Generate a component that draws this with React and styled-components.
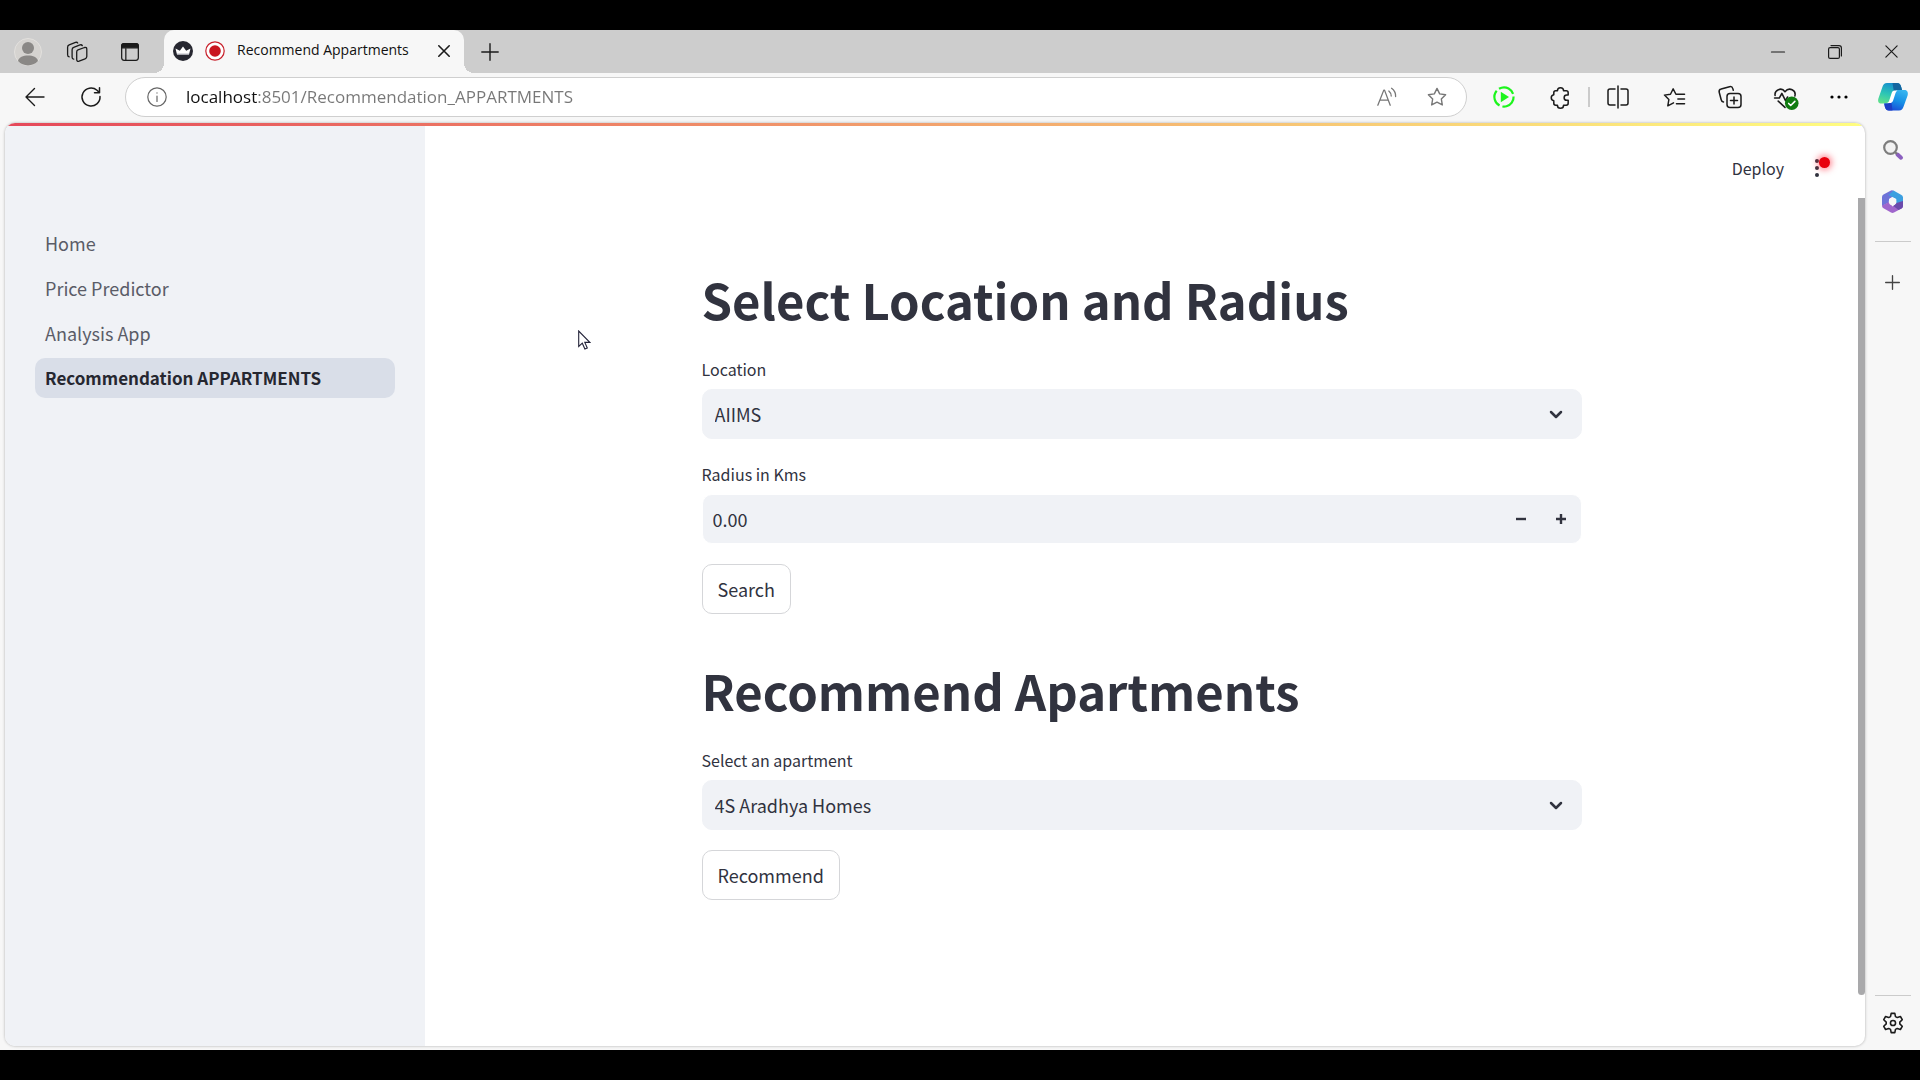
import React, { useState } from "react";
import styled, { createGlobalStyle } from "styled-components";

const GlobalStyle = createGlobalStyle`
  *, *::before, *::after { box-sizing: border-box; }
  body { margin: 0; background: #000; }
  button, input, select { font: inherit; color: inherit; }
`;

const uiFont = `"Open Sans", "Noto Sans", sans-serif`;
const appFont = `"Noto Sans CJK SC", "Noto Sans", sans-serif`;

const Screen = styled.div`
  display: flex;
  flex-direction: column;
  min-height: 100vh;
  padding: 30px 0;
  background: #000;
`;

const Browser = styled.div`
  display: flex;
  flex: 1;
  flex-direction: column;
  background: #f7f7f7;
  font-family: ${uiFont};
`;

const IconButton = styled.button`
  display: flex;
  flex: none;
  align-items: center;
  justify-content: center;
  width: ${(p) => p.$w || 32}px;
  height: 32px;
  padding: 0;
  border: 0;
  background: none;
  color: ${(p) => p.$color || "#1b1b1b"};

  svg { display: block; overflow: visible; }
`;

/* ---- tab strip ---- */

const TabStrip = styled.header`
  display: flex;
  align-items: center;
  height: 43px;
  padding: 0 0 0 2px;
  background: #cdcdcd;
`;

const Tab = styled.div`
  position: relative;
  display: flex;
  align-items: center;
  align-self: stretch;
  width: 300px;
  margin: 0 10px 0 4px;
  padding: 0 4px 2px 9px;
  gap: 12px;
  border-radius: 10px 10px 0 0;
  background: #f7f7f7;
  color: #111;

  svg { flex: none; }

  &::before, &::after {
    content: "";
    position: absolute;
    bottom: 0;
    width: 10px;
    height: 10px;
  }
  &::before {
    right: 100%;
    background: radial-gradient(circle at 0 0, transparent 10px, #f7f7f7 10px);
  }
  &::after {
    left: 100%;
    background: radial-gradient(circle at 100% 0, transparent 10px, #f7f7f7 10px);
  }
`;

const TabTitle = styled.span`
  flex: 1;
  padding-bottom: 2px;
  font-size: 14px;
  line-height: 20px;
  white-space: nowrap;
`;

const WindowButtons = styled.div`
  display: flex;
  margin-left: auto;
`;

/* ---- toolbar ---- */

const Toolbar = styled.div`
  display: flex;
  align-items: center;
  height: 50px;
  padding: 0 0 2px 7px;
`;

const AddressBar = styled.div`
  display: flex;
  flex: 1;
  align-items: center;
  height: 40px;
  margin: 0 9px 0 7px;
  padding: 0 4px 0 15px;
  border: 1px solid #cfcfcf;
  border-radius: 20px;
  background: #fff;
`;

const AddressInput = styled.input`
  flex: 1;
  min-width: 0;
  height: 36px;
  margin-left: 13px;
  padding: 0 0 2px;
  border: 0;
  outline: 0;
  background: linear-gradient(to right, #111 72px, #777 72px);
  background-clip: text;
  -webkit-background-clip: text;
  -webkit-text-fill-color: transparent;
  font-size: 17px;
`;

const Divider = styled.span`
  flex: none;
  width: ${(p) => (p.$across ? "36px" : "2px")};
  height: ${(p) => (p.$across ? "1px" : "20px")};
  margin: ${(p) => (p.$across ? "5px 0" : "0")};
  background: #cbcbcb;
`;

/* ---- page area and rail ---- */

const Body = styled.div`
  display: flex;
  flex: 1;
`;

const Page = styled.div`
  display: flex;
  flex: 1;
  flex-direction: column;
  margin: 0 0 4px 5px;
  overflow: hidden;
  border-radius: 10px;
  background: #fff;
  box-shadow: 0 0 3px rgba(0, 0, 0, 0.3);
  color: #31333f;
  font-family: ${appFont};
`;

const Decoration = styled.div`
  height: 3px;
  background: linear-gradient(90deg, #e5485a, #fffd80);
`;

const PageColumns = styled.div`
  display: flex;
  flex: 1;
`;

const Rail = styled.aside`
  display: flex;
  flex-direction: column;
  align-items: center;
  width: 55px;
  padding: 11px 0;
`;

const RailGroup = styled.div`
  display: flex;
  flex-direction: column;
  align-items: center;
  gap: ${(p) => p.$gap}px;
  margin-top: ${(p) => (p.$bottom ? "auto" : 0)};
`;

const Sidebar = styled.nav`
  display: flex;
  flex: none;
  flex-direction: column;
  gap: 5px;
  width: 420px;
  padding: 97px 30px 20px;
  background: #f0f2f6;
`;

const NavLink = styled.a`
  padding: 0 10px;
  border-radius: 10px;
  background: ${(p) => (p.$active ? "#d9dee8" : "transparent")};
  color: ${(p) => (p.$active ? "#262730" : "#5a5c67")};
  font-size: ${(p) => (p.$active ? 17 : 18)}px;
  font-weight: ${(p) => (p.$active ? 600 : 400)};
  line-height: 40px;
  text-decoration: none;
  white-space: nowrap;
`;

const Main = styled.main`
  display: flex;
  flex: 1;
  flex-direction: column;
`;

const AppHeader = styled.div`
  display: flex;
  align-items: center;
  justify-content: flex-end;
  height: 72px;
  padding: 12px 32px 0 0;
  gap: 17px;
`;

const DeployButton = styled.button`
  padding: 0;
  border: 0;
  background: none;
  font-size: 16px;
  line-height: 24px;
`;

const MenuButton = styled(IconButton)`
  position: relative;
`;

const RecordingDot = styled.span`
  position: absolute;
  top: 5px;
  right: 3px;
  width: 11px;
  height: 11px;
  border-radius: 50%;
  background: #e8000d;
  box-shadow: 0 0 6px 2px rgba(255, 40, 60, 0.55);
`;

const ScrollArea = styled.div`
  display: flex;
  flex: 1;
`;

const ScrollTrack = styled.div`
  width: 7px;
`;

const ScrollThumb = styled.div`
  height: 94%;
  border-radius: 0 0 4px 4px;
  background: #a9a9ab;
`;

const Content = styled.div`
  flex: 1;
  padding: 45px 40px 75px;
`;

const Block = styled.div`
  display: flex;
  flex-direction: column;
  align-items: flex-start;
  gap: 20px;
  max-width: 880px;
  margin: 0 auto;
`;

const Title = styled.h1`
  margin: 0;
  padding: 25px 0 4px;
  font-size: 49px;
  font-weight: 700;
  line-height: 62px;
`;

const Field = styled.div`
  width: 100%;
`;

const Label = styled.label`
  display: block;
  padding-bottom: 5px;
  font-size: 16px;
  line-height: 30px;
`;

const Control = styled.div`
  display: flex;
  align-items: center;
  height: 50px;
  border: 1px solid ${(p) => (p.$inset ? "#fff" : "#f0f2f6")};
  border-radius: 10px;
  background: #f0f2f6;
`;

const SelectBox = styled.select`
  flex: 1;
  align-self: stretch;
  margin-right: -35px;
  padding: 0 40px 0 12px;
  border: 0;
  outline: 0;
  appearance: none;
  background: transparent;
  font-size: 18px;
`;

const Chevron = styled.svg`
  margin-right: 15px;
  pointer-events: none;
`;

const NumberBox = styled.input`
  flex: 1;
  align-self: stretch;
  min-width: 0;
  padding: 0 10px;
  border: 0;
  outline: 0;
  appearance: textfield;
  background: transparent;
  font-size: 18px;

  &::-webkit-inner-spin-button { appearance: none; margin: 0; }
`;

const ActionButton = styled.button`
  height: 50px;
  padding: 0 15px;
  border: 1px solid #d5d6d9;
  border-radius: 10px;
  background: #fff;
  font-size: 18px;
  line-height: 30px;
`;

const Pointer = styled.svg`
  position: absolute;
  top: 330px;
  left: 578px;
`;

const Line = ({ size = 22, w = 1.5, box = 24, children, ...rest }) => (
  <svg width={size} height={size} viewBox={`0 0 ${box} ${box}`} fill="none" stroke="currentColor"
    strokeWidth={w} strokeLinecap="round" strokeLinejoin="round" aria-hidden="true" {...rest}>
    {children}
  </svg>
);

const starPath = "M12 2.6l2.900 6 6.500.9-4.700 4.600 1.100 6.600-5.800-3.100-5.800 3.100 1.100-6.600L2.600 9.500l6.500-.9z";

const Avatar = () => (
  <svg width="28" height="28" viewBox="0 0 28 28">
    <circle cx="14" cy="14" r="13.5" fill="#d5d3d0" stroke="#e3e1de" />
    <circle cx="14" cy="10" r="6" fill="#8a8886" />
    <path d="M4 23c1-4 5-5.500 10-5.500s9 1.500 10 5.500a13.500 13.500 0 0 1-20 0z" fill="#8a8886" />
  </svg>
);

const Workspaces = () => (
  <Line size={22} box={22} w={1.3}>
    <path d="M12 8.800l6.500-2.300c1.500-.4 2.300.2 2.300 1.700v7.300c0 1.200-.6 2-1.700 2.400l-6 2.300c-1.500.5-2.400-.1-2.400-1.600v-7.500c0-1.200.3-1.900 1.300-2.300z" />
    <path d="M7.700 18.200c-1-.1-1.600-.8-1.600-2V8.700c0-1.200.5-2 1.600-2.400l6.300-2.400c1-.3 1.900-.1 2.300.7" />
    <path d="M3.200 15.800c-1-.1-1.600-.8-1.600-2V6.200c0-1.200.5-2 1.600-2.400l6.300-2.400c1-.3 1.800-.1 2.200.6" />
  </Line>
);

const TabActions = () => (
  <Line size={20}>
    <rect x="2" y="2" width="20" height="20" rx="3" />
    <path d="M2 7V5a3 3 0 0 1 3-3h14a3 3 0 0 1 3 3v2z" fill="currentColor" />
    <path d="M7 8v14" />
  </Line>
);

const Crown = () => (
  <svg width="20" height="20" viewBox="0 0 20 20">
    <circle cx="10" cy="10" r="10" fill="#262730" />
    <path d="M2.500 7.500l4.300 2.200L10 5.500l3.200 4.200 4.300-2.200L16 13.500H4z" fill="#fff" />
    <path d="M4 13h12" stroke="#b9b9c2" />
  </svg>
);

const RecordIcon = () => (
  <svg width="20" height="20" viewBox="0 0 20 20">
    <circle cx="10" cy="10" r="9.200" fill="#fff" stroke="#c8202b" strokeWidth="1.200" />
    <circle cx="10" cy="10" r="5.800" fill="#c9151f" />
  </svg>
);

const Close = ({ size = 12, w = 1.4 }) => (
  <Line size={size} box={12} w={w}><path d="M.8.8l10.400 10.400M11.200.8L.8 11.200" /></Line>
);

const Plus = ({ size = 18, w = 1.4 }) => (
  <Line size={size} box={18} w={w}><path d="M9 .8v16.400M.8 9h16.400" /></Line>
);

const Back = () => <Line size={20} box={20} w={1.4}><path d="M19 10H1M9.500 1.500L1 10l8.500 8.500" /></Line>;

const Refresh = () => (
  <Line size={20} box={20}><path d="M19 9.500a9 9 0 1 1-3-6.200L18.300 5.500M18.500.8v5h-5" /></Line>
);

const Info = () => (
  <Line size={20} box={20} w={1.2}><circle cx="10" cy="10" r="9.200" /><path d="M10 9v5.500M10 5.800v.3" /></Line>
);

const ReadAloud = () => (
  <Line size={22} w={1.4}>
    <path d="M2 21L8.500 4.500h.8L15.500 21M4.300 15.500h9" />
    <path d="M14 5.500c1.800 1.500 2.600 3.300 2.600 5.500M17 2.500c3 2.200 4.600 5.200 4.400 9" />
  </Line>
);

const Play = () => (
  <svg width="22" height="24" viewBox="0 0 22 24" fill="none">
    <circle cx="11" cy="12" r="9.600" stroke="#1cf51c" strokeWidth="2.200" strokeDasharray="17.100 3" strokeDashoffset="-2" transform="rotate(-15 11 12)" />
    <path d="M7.800 6.800L16 12l-8.200 5.200z" fill="#1cf51c" />
  </svg>
);

const Puzzle = () => (
  <Line size={23} w={1.6}>
    <path d="M8.800 5a3.200 3.200 0 0 1 6.400 0H18a2 2 0 0 1 2 2v2.500h-1.500a2.700 2.700 0 0 0 0 5.400H20V18a2 2 0 0 1-2 2h-2.800a3.200 3.200 0 0 1-6.400 0H7a2 2 0 0 1-2-2v-2.600a3.200 3.200 0 0 1 0-6.300V7a2 2 0 0 1 2-2z" />
  </Line>
);

const Split = () => (
  <Line size={24}><path d="M9 4H4a2 2 0 0 0-2 2v12a2 2 0 0 0 2 2h5M15 4h5a2 2 0 0 1 2 2v12a2 2 0 0 1-2 2h-5M12 1v22" /></Line>
);

const Favorites = () => (
  <Line size={23}>
    <path d="M11 17.500L5 20.700l1.100-6.600L1.500 9.500l6.300-.9L10.600 3l2.900 5.600M13.500 8.600h9M15.500 13.500h7M14 18.500h8.500" />
  </Line>
);

const Collections = () => (
  <Line size={24}>
    <rect x="9" y="8.500" width="14" height="14" rx="3" />
    <path d="M16 12v7M12.500 15.500h7M5.500 17c-1.300-.2-2-1-2.300-2.200L1.200 7.300C.8 5.600 1.600 4.400 3.200 4l8.300-2.300c1.700-.4 2.900.3 3.300 1.900l.5 1.700" />
  </Line>
);

const Essentials = () => (
  <Line size={25}>
    <path d="M2 10c-.8-5 6-8.500 9.500-3.500 4-5 11-1.500 9.500 4M1.500 12.500H6l2.500-4.500 3.500 7 2-3.500M5 15.500l6.500 6" />
    <circle cx="18" cy="17.500" r="6.500" fill="#107c10" stroke="none" />
    <path d="M15 17.700l2 2 4-4" stroke="#fff" />
  </Line>
);

const Dots = () => (
  <svg width="18" height="4" viewBox="0 0 18 4"><circle cx="2" cy="2" r="1.600" /><circle cx="9" cy="2" r="1.600" /><circle cx="16" cy="2" r="1.600" /></svg>
);

const Copilot = () => (
  <svg width="30" height="28" viewBox="0 0 30 28">
    <defs>
      <linearGradient id="cpA" x1=".6" y1="0" x2=".3" y2="1"><stop stopColor="#168ccf" /><stop offset=".55" stopColor="#2cc5b5" /><stop offset="1" stopColor="#5fe08c" /></linearGradient>
      <linearGradient id="cpB" x1=".3" y1="1" x2=".7" y2="0"><stop stopColor="#1b49d6" /><stop offset=".5" stopColor="#1690e6" /><stop offset="1" stopColor="#35b4ef" /></linearGradient>
    </defs>
    <path d="M9 0h10c2.500 0 3.500 1.500 4.200 4l1 3.500h-4.500c-2.700 0-3.700 1.500-4.400 4l-2 6c-.8 2-2 3-4 3H3.500C.5 20.500-.4 18.500.4 15.500l4-11.500C5.300 1.300 6.500 0 9 0z" fill="url(#cpA)" />
    <path d="M14.500 0H19c2.500 0 3.500 1.500 4.200 4l1 3.500h-4.500c-2 0-3 .8-3.700 2z" fill="#14659f" />
    <path d="M21 27.500H11c-2.500 0-3.500-1.500-4.200-4L6 20.500h3.500c2.700 0 3.800-1.500 4.500-4l2-6c.8-2.200 2-3.500 4-3.500h6.500c3 0 3.900 2.500 3.100 5.500l-4 11c-.9 2.700-2.100 4-4.600 4z" fill="url(#cpB)" />
    <path d="M6.500 20.500h3c2 0 3.200-.8 3.800-2.200l1.200 9.200H11c-2.500 0-3.500-1.500-4.200-4z" fill="#1d3fc4" />
    <path d="M19.500 7.500h-3c-1.500 0-2.300 1-2.900 2.700l-2.300 7c-.6 1.700-1.300 2.600-2.800 2.900h3.200c2 0 2.900-1.100 3.500-2.900l2.200-6.700c.5-1.500 1.100-2.500 2.100-3z" fill="#fff" />
  </svg>
);

const SearchIcon = () => (
  <svg width="20" height="20" viewBox="0 0 20 20" fill="none">
    <path d="M14.500 14.500l3.500 3.200" stroke="#8b5fbf" strokeWidth="4" strokeLinecap="round" />
    <path d="M12 12l2 2" stroke="#777" strokeWidth="2" />
    <circle cx="7.500" cy="7.500" r="6.300" stroke="#7d7d7d" strokeWidth="2.200" fill="#f2f2f2" />
  </svg>
);

const Office = () => (
  <svg width="21" height="23" viewBox="0 0 21 23">
    <path d="M9 .5L1.500 4.500A3 3 0 0 0 0 7v9l7-3.500V9l7-4.500L11.500.7a3 3 0 0 0-2.500-.2z" fill="#6e73d8" />
    <path d="M11.500.6L19 4.700A3 3 0 0 1 21 7.300v9L14.300 13V9L6.500 5z" fill="#3c9fe0" />
    <path d="M21 12v4a3 3 0 0 1-1.500 2.500L12 22.500a3 3 0 0 1-3 0L1.500 18.300A3 3 0 0 1 0 15.500L7 12l3.500 4.500 4-3z" fill="#a066cc" />
    <path d="M21 11v5a3 3 0 0 1-1.500 2.500l-3 1.600-5-4 3-3z" fill="#6b4aab" />
    <circle cx="10.500" cy="11.500" r="3.700" fill="#f7f7f7" />
  </svg>
);

const Gear = () => (
  <Line size={22} w={1.7}>
    <circle cx="12" cy="12" r="2.800" />
    <path d="M10 1.500h4l.7 3.500 2 1.100 3.400-1.200 2 3.500L19.400 11v2l2.700 2.600-2 3.500-3.400-1.200-2 1.100-.7 3.500h-4L9.300 19l-2-1.100-3.400 1.200-2-3.500L4.600 13v-2L1.900 8.400l2-3.500 3.400 1.200 2-1.100z" />
  </Line>
);

const ChevronDown = () => (
  <Chevron width="20" height="20" viewBox="0 0 20 20" fill="none" stroke="#31333f" strokeWidth="2.500" strokeLinecap="round" strokeLinejoin="round" aria-hidden="true">
    <path d="M5 8l5 5 5-5" />
  </Chevron>
);

function SelectField({ id, label, options }) {
  return (
    <Field>
      <Label htmlFor={id}>{label}</Label>
      <Control>
        <SelectBox id={id}>
          {options.map((o) => <option key={o}>{o}</option>)}
        </SelectBox>
        <ChevronDown />
      </Control>
    </Field>
  );
}

function NumberField({ id, label }) {
  const [value, setValue] = useState("0.00");
  const step = (d) => setValue((v) => Math.max(0, Number(v) + d).toFixed(2));
  return (
    <Field>
      <Label htmlFor={id}>{label}</Label>
      <Control $inset>
        <NumberBox id={id} type="number" step="0.01" value={value} onChange={(e) => setValue(e.target.value)} />
        <IconButton $w={40} $color="#31333f" aria-label="Decrease" onClick={() => step(-0.01)}>
          <Line size={10} box={10} w={2.4} strokeLinecap="butt"><path d="M0 5h10" /></Line>
        </IconButton>
        <IconButton $w={40} $color="#31333f" aria-label="Increase" onClick={() => step(0.01)}>
          <Line size={10} box={10} w={2.4} strokeLinecap="butt"><path d="M0 5h10M5 0v10" /></Line>
        </IconButton>
      </Control>
    </Field>
  );
}

const pages = ["Home", "Price Predictor", "Analysis App", "Recommendation APPARTMENTS"];

export default function App() {
  return (
    <Screen>
      <GlobalStyle />
      <Browser>
        <TabStrip>
          <IconButton $w={52} aria-label="Profile"><Avatar /></IconButton>
          <IconButton $w={46} aria-label="Workspaces"><Workspaces /></IconButton>
          <IconButton $w={60} aria-label="Tab actions"><TabActions /></IconButton>
          <Tab>
            <Crown />
            <RecordIcon />
            <TabTitle>Recommend Appartments</TabTitle>
            <IconButton aria-label="Close tab"><Close w={1.6} /></IconButton>
          </Tab>
          <IconButton aria-label="New tab"><Plus /></IconButton>
          <WindowButtons>
            <IconButton $w={57} aria-label="Minimize"><Line size={14} box={14} w={1.2}><path d="M.5 7h13" /></Line></IconButton>
            <IconButton $w={57} aria-label="Restore">
              <Line size={14} box={14} w={1.2}><rect x=".6" y="2.600" width="10.800" height="10.800" rx="1.500" /><path d="M3 .6h8a2.400 2.400 0 0 1 2.400 2.400v8" /></Line>
            </IconButton>
            <IconButton $w={57} aria-label="Close"><Close size={13} w={1.1} /></IconButton>
          </WindowButtons>
        </TabStrip>

        <Toolbar>
          <IconButton $w={56} aria-label="Back"><Back /></IconButton>
          <IconButton $w={55} aria-label="Refresh"><Refresh /></IconButton>
          <AddressBar>
            <IconButton $color="#666" aria-label="Site information"><Info /></IconButton>
            <AddressInput aria-label="Address" defaultValue="localhost:8501/Recommendation_APPARTMENTS" />
            <IconButton $w={50} $color="#767676" aria-label="Read aloud"><ReadAloud /></IconButton>
            <IconButton $w={50} $color="#767676" aria-label="Add to favorites"><Line><path d={starPath} /></Line></IconButton>
          </AddressBar>
          <IconButton $w={56} aria-label="Recorder"><Play /></IconButton>
          <IconButton $w={56} aria-label="Extensions"><Puzzle /></IconButton>
          <Divider />
          <IconButton $w={56} aria-label="Split screen"><Split /></IconButton>
          <IconButton $w={56} aria-label="Favorites"><Favorites /></IconButton>
          <IconButton $w={55} aria-label="Collections"><Collections /></IconButton>
          <IconButton $w={56} aria-label="Browser essentials"><Essentials /></IconButton>
          <IconButton $w={52} aria-label="Settings and more"><Dots /></IconButton>
          <IconButton $w={55} aria-label="Copilot"><Copilot /></IconButton>
        </Toolbar>

        <Body>
          <Page>
            <Decoration />
            <PageColumns>
              <Sidebar>
                {pages.map((p, i) => (
                  <NavLink key={p} href="#" $active={i === 3}>{p}</NavLink>
                ))}
              </Sidebar>
              <Main>
                <AppHeader>
                  <DeployButton>Deploy</DeployButton>
                  <MenuButton $color="#31333f" aria-label="Main menu">
                    <svg width="4" height="18" viewBox="0 0 4 18" fill="currentColor"><circle cx="2" cy="2" r="2" /><circle cx="2" cy="9" r="2" /><circle cx="2" cy="16" r="2" /></svg>
                    <RecordingDot />
                  </MenuButton>
                </AppHeader>
                <ScrollArea>
                  <Content>
                    <Block>
                      <Title>Select Location and Radius</Title>
                      <SelectField id="location" label="Location" options={["AIIMS"]} />
                      <NumberField id="radius" label="Radius in Kms" />
                      <ActionButton>Search</ActionButton>
                      <Title>Recommend Apartments</Title>
                      <SelectField id="apartment" label="Select an apartment" options={["4S Aradhya Homes"]} />
                      <ActionButton>Recommend</ActionButton>
                    </Block>
                  </Content>
                  <ScrollTrack><ScrollThumb /></ScrollTrack>
                </ScrollArea>
              </Main>
            </PageColumns>
          </Page>
          <Rail>
            <RailGroup $gap={19}>
              <IconButton aria-label="Search"><SearchIcon /></IconButton>
              <IconButton aria-label="Microsoft 365"><Office /></IconButton>
              <Divider $across />
              <IconButton $color="#444" aria-label="Customize"><Plus size={15} w={1.6} /></IconButton>
            </RailGroup>
            <RailGroup $gap={6} $bottom>
              <Divider $across />
              <IconButton aria-label="Settings"><Gear /></IconButton>
            </RailGroup>
          </Rail>
        </Body>
      </Browser>
      <Pointer width="13" height="20" viewBox="0 0 13 20" aria-hidden="true">
        <path d="M.7 1v15.500l3.600-3.300 2.600 5.800 2.400-1.100-2.500-5.500h5z" fill="#fff" stroke="#222238" strokeWidth="1.100" />
      </Pointer>
    </Screen>
  );
}
